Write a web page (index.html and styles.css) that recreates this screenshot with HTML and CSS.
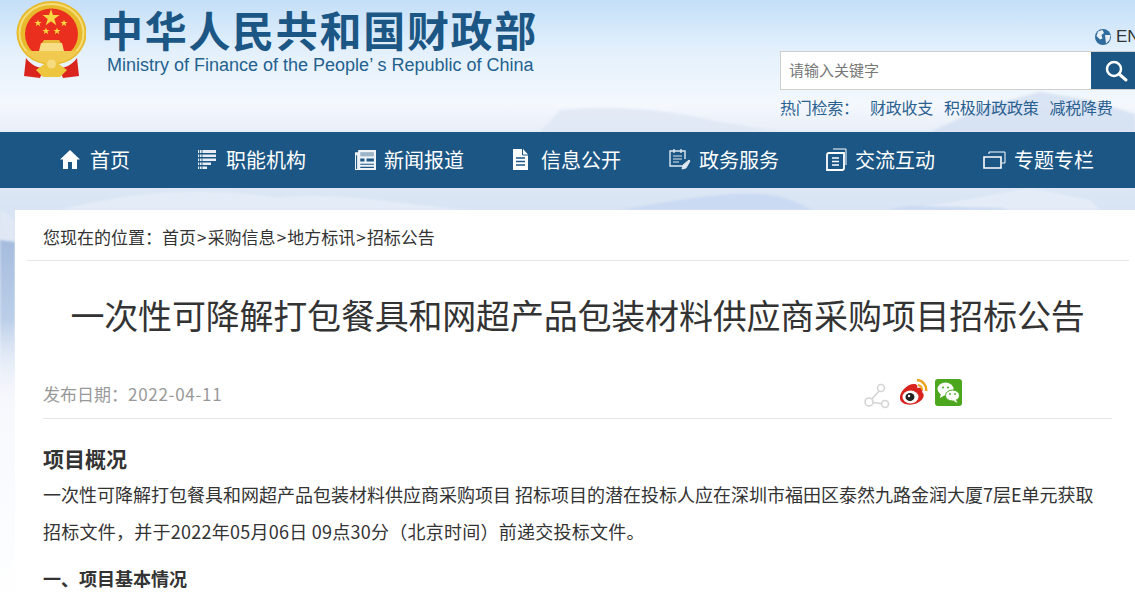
FILE: index.html
```html
<!DOCTYPE html>
<html lang="zh-CN">

<head>
    <meta charset="UTF-8">
    <meta name="viewport" content="width=device-width, initial-scale=1.0">
    <title>一次性可降解打包餐具和网超产品包装材料供应商采购项目招标公告</title>
    <link rel="stylesheet" href="styles.css">
</head>

<body>
    <svg class="scenery" width="1135" height="612" viewBox="0 0 1135 612" aria-hidden="true">
        <defs>
            <linearGradient id="leftHill" x1="0" y1="0" x2="0" y2="1">
                <stop offset="0" stop-color="#a6bcdd"/>
                <stop offset=".5" stop-color="#bccfe9"/>
                <stop offset="1" stop-color="#f6f8fd" stop-opacity="0"/>
            </linearGradient>
        </defs>
        <path d="M540 132 L560 110 C620 104 680 112 720 122 L780 132Z" fill="#dde6f3" opacity=".7"/>
        <path d="M930 132 L990 105 L1040 92 L1090 100 L1135 114 L1135 132Z" fill="#cfdcef" opacity=".7"/>
        <path d="M60 210 C130 192 200 186 280 198 C340 190 420 208 480 210Z" fill="#e4ecf7"/>
        <path d="M620 210 C680 200 730 190 770 195 C790 198 800 204 812 210Z" fill="#c9daf2"/>
        <path d="M880 210 C960 205 1010 190 1030 188 L1090 200 L1100 210Z" fill="#e4ecf7"/>
        <path d="M885 210 L910 206 L1000 208 L1010 210Z" fill="#c9daf2"/>
        <path d="M0 208 L15 222 V240 L0 240Z" fill="#dfe8f4"/>
        <path d="M0 240 L15 242 V400 H0Z" fill="url(#leftHill)"/>
    </svg>

    <header class="top">
        <a class="brand">
            <svg class="emblem" width="70" height="78" viewBox="0 0 70 78">
                <ellipse cx="35.500" cy="33" rx="35" ry="32" fill="#e8bb2c"/>
                <ellipse cx="35.500" cy="33" rx="32" ry="29" fill="none" stroke="#f5dd7a" stroke-width="2"/>
                <ellipse cx="35.500" cy="34" rx="26.500" ry="25.500" fill="#ea2f1f"/>
                <path d="M9 51 H62 C57 59 47 63 35.500 63 C24 63 14 59 9 51Z" fill="#f0c94e"/>
                <path d="M25 43 H46 L48 51 H23Z" fill="#f7dd85"/>
                <path d="M28 40 H43 L45 43 H26Z" fill="#e9b93a"/>
                <path d="M35 9 l2 6 h6.500 l-5.200 3.900 2 6.300 -5.300 -3.900 -5.300 3.900 2 -6.300 -5.200 -3.900 h6.500Z" fill="#f8d742"/>
                <path d="M22 19.500 l.9 2.500 h2.700 l-2.200 1.600 .8 2.600 -2.200 -1.600 -2.200 1.600 .8 -2.600 -2.200 -1.600 h2.700Z" fill="#f8d742"/>
                <path d="M48 19.500 l.9 2.500 h2.700 l-2.200 1.600 .8 2.600 -2.200 -1.600 -2.200 1.600 .8 -2.600 -2.200 -1.600 h2.700Z" fill="#f8d742"/>
                <path d="M30 27.500 l.9 2.500 h2.700 l-2.200 1.600 .8 2.600 -2.200 -1.600 -2.200 1.600 .8 -2.600 -2.200 -1.600 h2.700Z" fill="#f8d742"/>
                <path d="M41 27.500 l.9 2.500 h2.700 l-2.200 1.600 .8 2.600 -2.200 -1.600 -2.200 1.600 .8 -2.600 -2.200 -1.600 h2.700Z" fill="#f8d742"/>
                <path d="M10 58 C15 65 22 68 28 68 L24 78 L8 76Z" fill="#d9251d"/>
                <path d="M61 58 C56 65 49 68 43 68 L47 78 L63 76Z" fill="#d9251d"/>
                <path d="M20 70 C26 66 30 62 35.500 59 C41 62 45 66 51 70 L44 77 H27Z" fill="#edc53f"/>
                <circle cx="35.500" cy="64" r="4.500" fill="#f6dc7f"/>
            </svg>
            <div class="brand-text">
                <div class="brand-cn">中华人民共和国财政部</div>
                <div class="brand-en">Ministry of Finance of the People’ s Republic of China</div>
            </div>
        </a>
        <div class="tools">
            <div class="lang">
                <svg width="16" height="16" viewBox="0 0 16 16">
                    <circle cx="8" cy="8" r="8" fill="#2f6b9c"/>
                    <path d="M3 2.500 L7.500 1 L9 4 L6.500 6 L7.500 9.500 L5 10.500 L1.500 7Z M10 6 L15.500 6 L14.500 11 L11 14.500 L10.500 10Z" fill="#e8eef5"/>
                </svg>
                <span>EN</span>
            </div>
            <div class="search">
                <span class="search-text">请输入关键字</span>
                <div class="search-btn">
                    <svg width="26" height="26" viewBox="0 0 26 26">
                        <circle cx="11" cy="11" r="7" fill="none" stroke="#fff" stroke-width="2.500"/>
                        <path d="M16 16 L23 22" stroke="#fff" stroke-width="3" stroke-linecap="round"/>
                    </svg>
                </div>
            </div>
            <div class="hot">
                <span class="hot-label">热门检索：</span>
                <a>财政收支</a>
                <a>积极财政政策</a>
                <a>减税降费</a>
            </div>
        </div>
    </header>

    <nav class="nav">
        <a class="nav-item">
            <svg width="20" height="20" viewBox="0 0 20 20"><path d="M10 1 L20 10.500 H17 V20 H12 V13 H8 V20 H3 V10.500 H0Z" fill="#fff"/></svg>
            首页
        </a>
        <a class="nav-item">
            <svg width="18" height="20" viewBox="0 0 18 20" fill="#fff"><path d="M0 1 H18 V4 H0Z M0 5.500 H18 V8 H0Z M0 9.500 H18 V12 H0Z M0 13.500 H13 V16 H0Z M0 17.500 H9 V20 H0Z" opacity=".9"/><path d="M1.500 0 V20 M4 0 V20" stroke="#1b5684" stroke-width=".8"/></svg>
            职能机构
        </a>
        <a class="nav-item nav-tight">
            <svg width="21" height="21" viewBox="0 0 20 20"><path d="M0 3 H3 V1 H20 V20 H0Z" fill="#eef3f7"/><path d="M5 3 H18 V7 H5Z" fill="#9db5c9"/><path d="M11 9 H18 V12 H11Z M5 14 H18 V15 H5Z M5 17 H18 V18 H5Z M5 9 H9 V12 H5Z" fill="#1b5684"/><path d="M1.500 6 V19" stroke="#1b5684"/></svg>
            新闻报道
        </a>
        <a class="nav-item">
            <svg width="19" height="21" viewBox="0 0 19 21"><path d="M1 0 H11 L16 5.500 V21 H1Z" fill="#fff"/><path d="M10.500 0 V6 H16" fill="none" stroke="#1b5684"/><path d="M4 9 H13 M4 12.500 H13 M4 16 H13" stroke="#1b5684" stroke-width="1.300"/></svg>
            信息公开
        </a>
        <a class="nav-item nav-tight">
            <svg width="22" height="22" viewBox="0 0 22 22" fill="none" stroke="#dfe8f0"><path d="M15 18 H1 V3 H16 V11" stroke-width="1.400"/><path d="M5 1 V5 M12 1 V5" stroke-width="1.400"/><path d="M4 8 H13 M4 11 H13 M4 14 H10" stroke-width="1.200"/><path d="M13 21 L14 17 L20 12 L21 13 L17 20Z" fill="#dfe8f0"/></svg>
            政务服务
        </a>
        <a class="nav-item nav-tight">
            <svg width="21" height="23" viewBox="0 0 21 23" fill="none" stroke="#fff"><path d="M7 1 H20 V17" stroke-width="1"/><path d="M3 5 H18 V20 Q18 22 16 22 H1 V7 Q1 5 3 5Z" stroke-width="1.800"/><path d="M6 10 H13 M6 13.500 H13 M6 17 H13" stroke-width="1.500"/></svg>
            交流互动
        </a>
        <a class="nav-item nav-tight">
            <svg width="23" height="19" viewBox="0 0 23 19" fill="none" stroke="#fff"><path d="M1 7 H18 V18 H1Z" stroke-width="1.600"/><path d="M6 4 V2 H22 V13 H19" stroke-width="1"/></svg>
            专题专栏
        </a>
    </nav>

    <main class="content">
        <div class="crumbs">您现在的位置：首页<span class="sep">&gt;</span>采购信息<span class="sep">&gt;</span>地方标讯<span class="sep">&gt;</span>招标公告</div>
        <div class="article">
            <h1 class="title">一次性可降解打包餐具和网超产品包装材料供应商采购项目招标公告</h1>
            <div class="meta">
                <span class="date">发布日期：<span class="date-num">2022-04-11</span></span>
                <div class="share">
                    <svg class="share-link" width="26" height="26" viewBox="0 0 26 26" fill="none" stroke="#d4d4d4" stroke-width="1.600">
                        <circle cx="17" cy="5" r="3.500"/>
                        <circle cx="5" cy="19" r="4"/>
                        <circle cx="21" cy="21" r="3.500"/>
                        <path d="M15 8 L8 16 M9 19.500 L17.500 20.500"/>
                    </svg>
                    <svg width="30" height="28" viewBox="0 0 30 28">
                        <path d="M1 20 C0 13 8 5 15 5 C18 5 19 7 18 9 C22 8 25 10 23 13 C26 15 25 20 20 23 C14 27 3 27 1 20Z" fill="#d9231f"/>
                        <ellipse cx="11.500" cy="18" rx="8" ry="6.500" fill="#fff"/>
                        <ellipse cx="11" cy="18" rx="4.500" ry="4" fill="#222"/>
                        <circle cx="10" cy="17" r="1.200" fill="#fff"/>
                        <path d="M18 1 A9.500 9.500 0 0 1 27 12" fill="none" stroke="#eba21c" stroke-width="2.500"/>
                        <path d="M19 6 A4.500 4.500 0 0 1 23 11" fill="none" stroke="#eba21c" stroke-width="2"/>
                    </svg>
                    <svg width="27" height="27" viewBox="0 0 27 27">
                        <rect width="27" height="27" rx="3" fill="#4ca61e"/>
                        <ellipse cx="10.500" cy="10" rx="8" ry="6.500" fill="#fff"/>
                        <path d="M6 14 L5 19 L10 16Z" fill="#fff"/>
                        <ellipse cx="17.500" cy="16.500" rx="7" ry="5.500" fill="#fff" stroke="#4ca61e"/>
                        <path d="M21 21 L22.500 24 L18 21.500Z" fill="#fff"/>
                        <circle cx="8" cy="8.500" r="1" fill="#4ca61e"/>
                        <circle cx="13" cy="8.500" r="1" fill="#4ca61e"/>
                        <circle cx="15" cy="15" r=".9" fill="#4ca61e"/>
                        <circle cx="20" cy="15" r=".9" fill="#4ca61e"/>
                    </svg>
                </div>
            </div>
            <h2 class="section">项目概况</h2>
            <p class="para">一次性可降解打包餐具和网超产品包装材料供应商采购项目 招标项目的潜在投标人应在深圳市福田区泰然九路金润大厦7层E单元获取</p>
            <p class="para para-end">招标文件，并于2022年05月06日 09点30分（北京时间）前递交投标文件。</p>
            <h3 class="sub">一、项目基本情况</h3>
        </div>
    </main>
</body>

</html>
```

FILE: styles.css
```css
html,
body {
    margin: 0;
    padding: 0;
    height: 612px;
    overflow: hidden;
}

body {
    position: relative;
    font-family: "Noto Sans CJK SC", "Liberation Sans", sans-serif;
    color: #333;
    background: linear-gradient(180deg, #c4dff8 0px, #e3f0fc 50px, #f4f8fd 105px, #e8eef8 132px, #d8e4f4 210px, #f6f8fd 400px, #fff 612px);
}

.scenery {
    position: absolute;
    left: 0;
    top: 0;
    filter: blur(1px);
}

.top {
    position: relative;
    height: 132px;
    display: flex;
    justify-content: space-between;
    box-sizing: border-box;
    padding-left: 16px;
}

.brand {
    display: flex;
    align-items: flex-start;
    gap: 15px;
}

.brand-cn {
    margin-top: 4px;
    font-size: 42px;
    line-height: 50px;
    font-weight: 700;
    letter-spacing: 1.700px;
    color: #1b5684;
    white-space: nowrap;
}

.brand-en {
    margin-top: 1px;
    padding-left: 6px;
    font-family: "Liberation Sans", sans-serif;
    font-size: 18px;
    line-height: 20px;
    color: #23618f;
    white-space: nowrap;
}

.tools {
    width: 355px;
    flex: none;
    white-space: nowrap;
}

.lang {
    height: 20px;
    margin-top: 27px;
    padding-left: 315px;
    display: flex;
    align-items: center;
    gap: 5px;
    font-family: "Liberation Sans", sans-serif;
    font-size: 17px;
    color: #333;
}

.lang svg {
    flex: none;
}

.search {
    margin-top: 4px;
    width: 355px;
    height: 39px;
    box-sizing: border-box;
    background-color: #fff;
    border: 1px solid #cfcfcf;
    border-right: none;
    display: flex;
    justify-content: space-between;
}

.search-text {
    padding-left: 8px;
    font-size: 15px;
    line-height: 36px;
    color: #777;
}

.search-btn {
    width: 44px;
    background-color: #1b5684;
    display: flex;
    align-items: center;
    padding-left: 12px;
    box-sizing: border-box;
}

.hot {
    margin-top: 6px;
    display: flex;
    font-size: 16px;
    letter-spacing: -0.250px;
    line-height: 22px;
    color: #2a6090;
}

.hot-label {
    width: 90px;
}

.hot a {
    margin-right: 11px;
}

.nav {
    position: relative;
    height: 56px;
    box-sizing: border-box;
    background-color: #1b5684;
    padding: 0 0 2px 60px;
    display: flex;
    align-items: center;
}

.nav-item {
    width: 157px;
    flex: none;
    display: flex;
    align-items: center;
    gap: 10px;
    font-size: 20px;
    color: #fff;
    white-space: nowrap;
}

.nav-item:first-child {
    width: 138px;
}

.nav-tight {
    gap: 8px;
}

.content {
    position: relative;
    margin: 22px 0 0 15px;
    width: 1135px;
    height: 402px;
    background-color: #fff;
    padding: 0 6px 0 12px;
    box-sizing: border-box;
}

.crumbs {
    height: 51px;
    box-sizing: border-box;
    padding: 15px 0 0 16px;
    font-size: 17px;
    line-height: 24px;
    color: #333;
    border-bottom: 1px solid #e6e6e6;
    width: 1102px;
}

.sep {
    padding: 0 1.100px;
}

.article {
    padding: 0 0 0 16px;
    width: 1069px;
}

.title {
    margin: 0;
    padding-top: 28px;
    font-size: 34px;
    letter-spacing: -0.200px;
    line-height: 52px;
    font-weight: 400;
    text-align: center;
    color: #333;
    white-space: nowrap;
}

.meta {
    margin-top: 33px;
    height: 45px;
    box-sizing: border-box;
    display: flex;
    justify-content: space-between;
    border-bottom: 1px solid #e6e6e6;
}

.date {
    padding-top: 8px;
    font-size: 17px;
    line-height: 24px;
    color: #999;
}

.date-num {
    letter-spacing: 0.700px;
}

.share {
    display: flex;
    align-items: flex-start;
    gap: 6px;
    margin-right: 150px;
    padding-top: 5px;
}

.share-link {
    margin: 4px 3px 0 0;
}

.section {
    margin: 24px 0 0;
    font-size: 21px;
    line-height: 30px;
    font-weight: 700;
    color: #333;
}

.para {
    margin: 3px 0 0;
    font-size: 18px;
    line-height: 37px;
    color: #333;
    white-space: nowrap;
}

.para-end {
    margin-top: 0;
    letter-spacing: 0.250px;
}

.sub {
    margin: 16px 0 0;
    font-size: 18px;
    line-height: 24px;
    font-weight: 700;
    color: #333;
}
```
